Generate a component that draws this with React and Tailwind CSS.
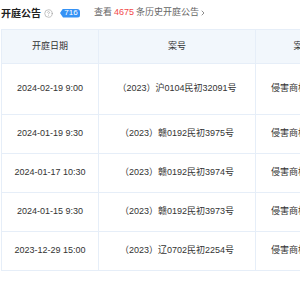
import { CircleHelp, ChevronRight } from "lucide-react";

const rows = [
  { date: "2024-02-19 9:00", no: "（2023）沪0104民初32091号", cause: "侵害商标权纠纷", tall: true },
  { date: "2024-01-19 9:30", no: "（2023）赣0192民初3975号", cause: "侵害商标权纠纷" },
  { date: "2024-01-17 10:30", no: "（2023）赣0192民初3974号", cause: "侵害商标权纠纷" },
  { date: "2024-01-15 9:30", no: "（2023）赣0192民初3973号", cause: "侵害商标权纠纷" },
  { date: "2023-12-29 15:00", no: "（2023）辽0702民初2254号", cause: "侵害商标权纠纷" },
];

function Cell({ children, className = "" }) {
  return (
    <div
      className={
        "flex items-center justify-center whitespace-nowrap border-r border-b border-[#e6eef8] text-[9px] text-[#333] " +
        className
      }
    >
      {children}
    </div>
  );
}

export default function App() {
  return (
    <div className="h-[300px] w-[300px] overflow-hidden bg-white pl-[1px] font-['Liberation_Sans','Noto_Sans_CJK_SC',sans-serif]">
      {/* 标题栏 */}
      <div className="flex h-[26px] items-center">
        <span className="text-[10px] font-bold text-[#222]">开庭公告</span>
        <CircleHelp className="ml-[3px] h-[9px] w-[9px] text-[#9a9a9a]" strokeWidth={1.6} />
        <span className="ml-[7px] flex h-[9px] w-[20px] items-center justify-center rounded-r-[3px] bg-[#3592f5] pl-[2px] text-[8px] leading-none text-white [clip-path:polygon(3px_0,100%_0,100%_100%,3px_100%,0_50%)]">
          716
        </span>
        <span className="ml-[14px] flex items-center text-[9px] text-[#666]">
          查看
          <span className="mx-[2px] text-[#f24848]">4675</span>
          条历史开庭公告
          <ChevronRight className="h-[8px] w-[8px] text-[#555]" strokeWidth={2} />
        </span>
      </div>

      {/* 表格 */}
      <div className="mt-[3px] grid w-max grid-cols-[97px_157px_94px_120px] border-t border-l border-[#e6eef8]">
        <Cell className="h-[34px] bg-[#f2f7fc]">开庭日期</Cell>
        <Cell className="h-[34px] bg-[#f2f7fc]">案号</Cell>
        <Cell className="h-[34px] bg-[#f2f7fc]">案由</Cell>
        <Cell className="h-[34px] bg-[#f2f7fc]">当事人</Cell>
        {rows.map((r) => (
          <div key={r.no} className="contents">
            <Cell className={r.tall ? "h-[51px]" : "h-[39px]"}>{r.date}</Cell>
            <Cell className={r.tall ? "h-[51px]" : "h-[39px]"}>{r.no}</Cell>
            <Cell className={r.tall ? "h-[51px]" : "h-[39px]"}>{r.cause}</Cell>
            <Cell className={r.tall ? "h-[51px]" : "h-[39px]"}>原告：某某公司</Cell>
          </div>
        ))}
      </div>
    </div>
  );
}
